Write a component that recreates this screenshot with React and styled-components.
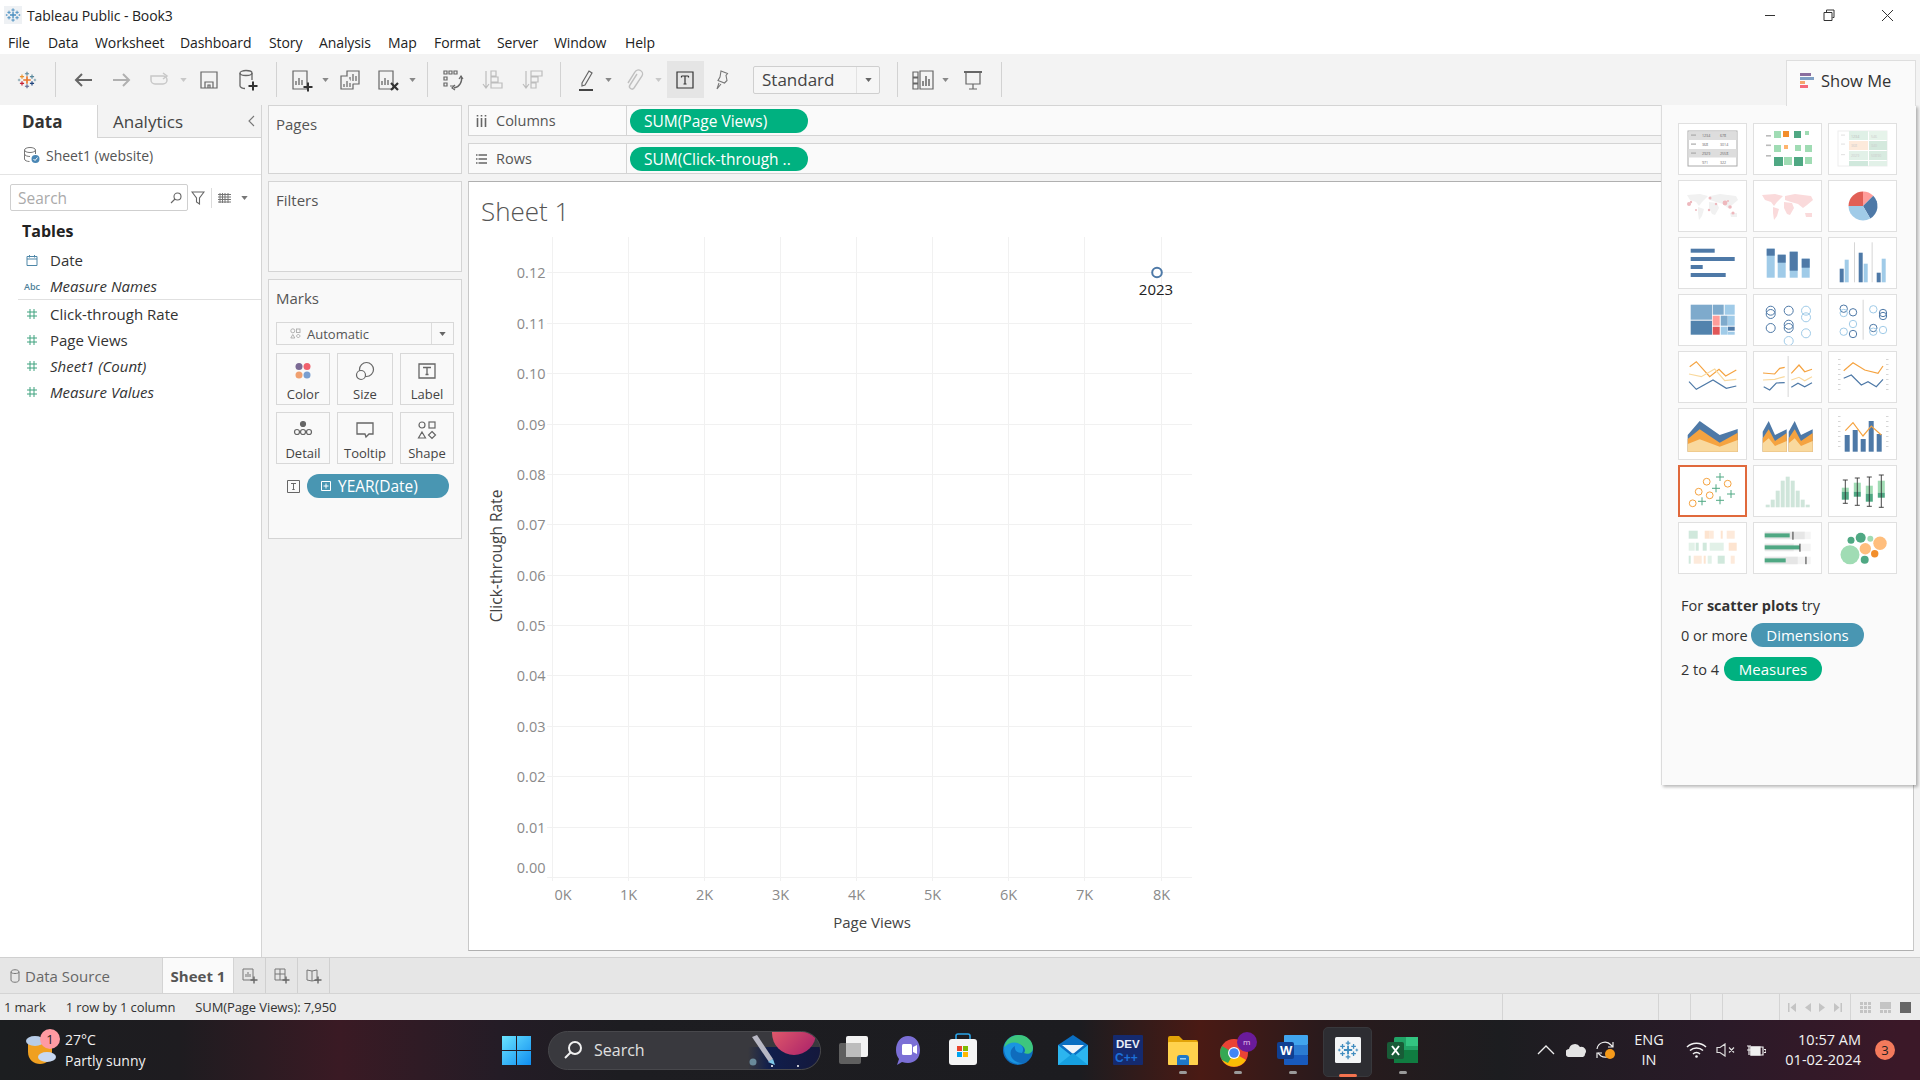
import React from "react";
import styled, { createGlobalStyle } from "styled-components";

const UI = `"Open Sans", "Noto Sans", "Liberation Sans", sans-serif`;

const Global = createGlobalStyle`
  html, body { margin: 0; padding: 0; background: #fff; }
  * { box-sizing: border-box; }
  svg { display: block; flex: none; }
`;

const Page = styled.div`
  width: 1920px; height: 1080px; overflow: hidden; display: flex; flex-direction: column;
  font-family: ${UI}; color: #333; background: #f3f3f3;
`;
const TitleBar = styled.div`
  height: 30px; flex: none; background: #fff; display: flex; align-items: center; padding-left: 4px;
`;
const TitleText = styled.span`
  margin-left: 5px; font-size: 14px; color: #222; letter-spacing: -0.1px; white-space: nowrap;
`;
const WinButtons = styled.div`margin-left: auto; margin-right: 3px; display: flex;`;
const WinButton = styled.div`
  width: 59px; height: 30px; display: flex; align-items: center; justify-content: center;
`;
const MenuBar = styled.div`
  height: 24px; flex: none; background: #fff; display: flex; align-items: center;
`;
const MenuItem = styled.span`
  font-size: 14px; color: #222; margin-left: ${p => p.$ml}px; width: ${p => p.$w}px; white-space: nowrap; letter-spacing: -0.1px;
`;
const Toolbar = styled.div`
  height: 51px; flex: none; background: #f3f3f3; display: flex; align-items: center; position: relative; z-index: 3;
`;
const Tool = styled.div`
  width: ${p => p.$w || 24}px; margin-left: ${p => p.$ml}px; height: 24px; flex: none;
  display: flex; align-items: center; justify-content: center;
`;
const ToolSep = styled.div`
  width: 1px; height: 35px; flex: none; background: #d2d2d2; margin-left: ${p => p.$ml}px;
`;
const SelectedTool = styled.div`
  width: 37px; height: 37px; margin-left: 5px; flex: none; background: #e5e5e5;
  display: flex; align-items: center; justify-content: center; padding-right: 2px;
`;
const StyleSelect = styled.div`
  width: 127px; height: 28px; margin-left: 19px; flex: none; background: #f6f6f6;
  border: 1px solid #cfcfcf; border-radius: 2px; display: flex; align-items: center; font-size: 17px; color: #444;
`;
const StyleLabel = styled.span`flex: 1; padding-left: 8px;`;
const StyleCaret = styled.span`
  width: 23px; height: 100%; border-left: 1px solid #e2e2e2; display: flex; align-items: center; justify-content: center;
`;
const ShowMeTab = styled.div`
  margin-left: auto; margin-right: 4px; align-self: flex-end; width: 130px; height: 46px; margin-bottom: -1px;
  background: #fafafa; border: 1px solid #dedede; border-bottom: none; display: flex; align-items: center;
  padding: 0 0 6px 13px; gap: 6px; font-size: 16.5px; color: #333;
`;

const Main = styled.div`
  flex: 1; min-height: 0; display: flex; position: relative; background: #f3f3f3;
`;
const DataPane = styled.div`
  width: 262px; flex: none; background: #fff; border-right: 1px solid #d4d4d4; display: flex; flex-direction: column;
`;
const PaneTabs = styled.div`height: 33px; display: flex; background: #f3f3f3; border-bottom: 1px solid #d4d4d4;`;
const PaneTab = styled.div`
  width: ${p => p.$w}px; height: ${p => (p.$active ? 33 : 32)}px; display: flex; align-items: center;
  padding-left: ${p => p.$pad}px; font-size: 17px; background: ${p => (p.$active ? "#fff" : "#f3f3f3")};
  border-right: ${p => (p.$active ? "1px solid #d4d4d4" : "none")};
  font-weight: ${p => (p.$active ? 700 : 400)}; color: ${p => (p.$active ? "#333" : "#444")};
`;
const PaneCollapse = styled.div`margin-left: auto; margin-right: 6px; align-self: center;`;
const SourceRow = styled.div`
  height: 37px; flex: none; border-bottom: 1px solid #e4e4e4; display: flex; align-items: center;
  padding: 0 0 2px 23px; gap: 6px; font-size: 14px; color: #555;
`;
const SearchRow = styled.div`
  margin-top: 9px; height: 27px; flex: none; display: flex; align-items: center; padding-left: 10px;
`;
const SearchBox = styled.div`
  width: 178px; height: 27px; border: 1px solid #cfcfcf; border-radius: 2px; display: flex; align-items: center;
  justify-content: space-between; padding: 0 5px 0 7px; font-size: 15.5px; color: #aaa;
`;
const FilterIcon = styled.div`margin-left: 3px;`;
const MiniDivider = styled.div`width: 1px; height: 20px; background: #dcdcdc; margin: 0 6px;`;
const MiniCaret = styled.span`margin-left: 10px;`;
const TablesHead = styled.div`
  height: 36px; flex: none; padding: 4px 0 0 22px; display: flex; align-items: center; font-size: 16px; font-weight: 700; color: #222;
`;
const FieldRow = styled.div`
  height: 26px; flex: none; display: flex; align-items: center; padding-left: 22px; font-size: 15px; color: #333;
  font-style: ${p => (p.$italic ? "italic" : "normal")};
`;
const FieldIcon = styled.span`
  width: 20px; margin-right: 8px; display: flex; justify-content: center; align-items: center; font-style: normal;
`;
const AbcGlyph = styled.span`font-size: 9px; font-weight: 600; color: #4e7f99;`;
const FieldDivider = styled.div`height: 1px; flex: none; background: #e0e0e0; margin: 0 0 1px 18px;`;

const CardColumn = styled.div`
  width: 194px; flex: none; margin-left: 6px; display: flex; flex-direction: column; gap: 7px;
`;
const Card = styled.div`
  height: ${p => p.$h}px; flex: none; background: #f9f9f9; border: 1px solid #d4d4d4; padding: 8px 7px 0 7px;
`;
const CardTitle = styled.div`height: 20px; line-height: 20px; font-size: 15px; color: #555;`;
const MarkSelect = styled.div`
  margin-top: 14px; height: 23px; width: 178px; border: 1px solid #d8d8d8; display: flex; align-items: center;
  font-size: 13px; color: #555;
`;
const MarkSelectBody = styled.div`flex: 1; display: flex; align-items: center; gap: 6px; padding-left: 13px;`;
const MarkSelectCaret = styled.div`
  width: 22px; height: 100%; border-left: 1px solid #dcdcdc; display: flex; align-items: center; justify-content: center;
`;
const MarkGrid = styled.div`
  margin-top: 8px; display: grid; grid-template-columns: 54px 56px 54px; grid-auto-rows: 52px; gap: 7px;
`;
const MarkButton = styled.div`
  border: 1px solid #d8d8d8; display: flex; flex-direction: column; align-items: center; padding-top: 6px;
`;
const MarkIcon = styled.div`height: 21px; display: flex; align-items: center;`;
const MarkLabel = styled.div`margin-top: 5px; font-size: 13px; line-height: 16px; color: #444;`;
const MarkPillRow = styled.div`margin-top: 10px; display: flex; align-items: center; padding-left: 11px; gap: 7px;`;
const TeePill = styled.div`
  height: 24px; width: 142px; border-radius: 12px; background: #4996b2; color: #fff; display: flex; align-items: center;
  padding-left: 14px; gap: 7px; font-size: 15.5px; white-space: nowrap;
`;

const RightColumn = styled.div`
  flex: 1; min-width: 0; margin: 0 6px 0 6px; display: flex; flex-direction: column; padding-bottom: 6px;
`;
const Shelf = styled.div`
  height: 31px; flex: none; background: #fafafa; border: 1px solid #d4d4d4; border-right: none; display: flex; align-items: center;
  margin-bottom: 7px;
`;
const ShelfLabel = styled.div`
  width: 158px; height: 100%; flex: none; border-right: 1px solid #d4d4d4; display: flex; align-items: center;
  padding-left: 7px; gap: 9px; font-size: 14.5px; color: #555;
`;
const MeasurePill = styled.div`
  height: 24px; width: 178px; margin-left: 3px; border-radius: 12px; background: #00b180; color: #fff;
  display: flex; align-items: center; padding-left: 14px; font-size: 15.5px; white-space: nowrap;
`;
const ViewPane = styled.div`
  flex: 1; min-height: 0; background: #fff; border: 1px solid #c8c8c8; border-top-color: #b0b0b0; border-bottom-color: #b0b0b0;
  overflow: hidden;
`;
const SheetTitle = styled.div`
  height: 48px; padding: 12px 0 0 12px; line-height: 34px; font-size: 26px; font-weight: 300; color: #555;
`;
const AxisLabel = styled.text`
  font-family: ${UI}; font-size: ${p => p.$size || 14.5}px; fill: ${p => p.$fill || "#8a8a8a"};
`;

const ShowMePanel = styled.div`
  position: absolute; top: 0; right: 4px; width: 255px; height: 680px; background: #fafafa; z-index: 2;
  border-left: 1px solid #dcdcdc; box-shadow: 2px 2px 3px rgba(0,0,0,0.28); padding: 18px 0 0 16px;
`;
const ThumbGrid = styled.div`
  display: grid; grid-template-columns: repeat(3, 69px); grid-auto-rows: 52px; column-gap: 6px; row-gap: 5px;
`;
const ThumbCell = styled.div`
  background: #fff; border: ${p => (p.$on ? "2px solid #e0693c" : "1px solid #e0e0e0")};
  display: flex; align-items: center; justify-content: center; overflow: hidden;
`;
const HintLine = styled.div`
  display: flex; align-items: center; padding-left: 3px; font-size: 14.5px; color: #333;
  height: ${p => p.$h || 24}px; margin-top: ${p => p.$mt}px; white-space: pre;
`;
const HintLabel = styled.span`width: ${p => p.$w}px; flex: none;`;
const HintPill = styled.div`
  height: 24px; width: ${p => p.$w}px; border-radius: 12px; background: ${p => p.$c}; color: #fff;
  display: flex; align-items: center; justify-content: center; font-size: 15px;
`;

const TabBar = styled.div`
  height: 37px; flex: none; background: #e6e6e6; border-top: 1px solid #d0d0d0; border-bottom: 1px solid #d4d4d4; display: flex;
`;
const SourceTab = styled.div`
  width: 162px; display: flex; align-items: center; padding-left: 10px; gap: 5px; font-size: 15px; color: #666;
`;
const SheetTab = styled.div`
  width: 72px; background: #fafafa; border-left: 1px solid #d4d4d4; border-right: 1px solid #d4d4d4; display: flex;
  align-items: center; justify-content: center; font-size: 15px; font-weight: 700; color: #555;
`;
const AddTab = styled.div`
  width: 32px; border-right: 1px solid #d0d0d0; display: flex; align-items: center; justify-content: center;
`;
const StatusBar = styled.div`
  height: 26px; flex: none; background: #ebebeb; display: flex; align-items: center; font-size: 13px; color: #333;
`;
const StatusText = styled.span`margin-left: ${p => p.$ml}px; white-space: nowrap; letter-spacing: -0.1px;`;
const StatusCells = styled.div`margin-left: auto; display: flex; height: 100%;`;
const StatusCell = styled.div`
  width: ${p => p.$w}px; border-left: 1px solid #d4d4d4; display: flex; align-items: center; justify-content: space-evenly;
`;

const Taskbar = styled.div`
  height: 60px; flex: none; display: flex; align-items: center; color: #fff;
  background: linear-gradient(90deg, #1c1e20 0, #1e1c20 180px, #3a1a24 340px, #241c26 500px, #1d1d21 620px, #1c1c20 1080px,
    #4a1a14 1200px, #2a1a1c 1320px, #1c1d20 1500px, #2a1a28 1720px, #3b1828 1900px);
`;
const WeatherBlock = styled.div`width: 502px; flex: none; display: flex; align-items: center; padding-left: 26px; gap: 7px;`;
const WeatherIcon = styled.div`position: relative; width: 32px; height: 32px;`;
const WeatherBadge = styled.div`
  position: absolute; left: 14px; top: -5px; width: 20px; height: 20px; border-radius: 50%; background: #ff9aa2; color: #222;
  font-size: 13px; display: flex; align-items: center; justify-content: center;
`;
const WeatherText = styled.div`font-size: 14px; line-height: 21px; color: #f0f0f0;`;
const TaskSearch = styled.div`
  margin-left: 17px; width: 273px; height: 39px; flex: none; border-radius: 20px; background: #39393e; border: 1px solid #48484c;
  display: flex; align-items: center; overflow: hidden; padding-left: 14px; font-size: 16px; color: #e0e0e0; gap: 11px;
`;
const SearchArt = styled.div`margin-left: auto;`;
const Apps = styled.div`margin-left: 4px; display: flex;`;
const AppSlot = styled.div`
  width: 55px; height: 60px; position: relative; display: flex; align-items: center; justify-content: center;
  &::before {
    content: ""; display: ${p => (p.$active ? "block" : "none")}; position: absolute; left: 3px; right: 3px; top: 7px; bottom: 3px;
    background: #2d2d32; border: 1px solid #38383c; border-radius: 5px;
  }
  &::after {
    content: ""; display: ${p => (p.$dot ? "block" : "none")}; position: absolute; bottom: ${p => (p.$active ? 3 : 6)}px; left: 50%;
    width: ${p => (p.$active ? 18 : 8)}px; margin-left: ${p => (p.$active ? -9 : -4)}px; height: 3px; border-radius: 2px;
    background: ${p => (p.$active ? "#f4734f" : "#9a9a9a")};
  }
  & > svg { position: relative; z-index: 1; }
`;
const Tray = styled.div`margin-left: auto; padding-right: 25px; display: flex; align-items: center;`;
const TraySlot = styled.div`width: 30px; display: flex; justify-content: center; margin-left: ${p => p.$ml || 0}px;`;
const TrayStack = styled.div`
  width: ${p => p.$w}px; text-align: ${p => p.$align}; font-size: 14.5px; line-height: 20px; color: #f2f2f2; white-space: nowrap;
`;
const NotifyBadge = styled.div`
  margin-left: 14px; width: 20px; height: 20px; border-radius: 50%; background: #f47a5c; color: #222; font-size: 13px;
  display: flex; align-items: center; justify-content: center;
`;

/* ---------- icon drawings ---------- */
const Ic = ({ w = 24, h = 24, vb, c = "#666", sw = 1.2, children }) => (
  <svg width={w} height={h} viewBox={vb || `0 0 ${w} ${h}`} fill="none" stroke={c} strokeWidth={sw}>{children}</svg>
);
const Caret = ({ c = "#888" }) => (
  <svg width="7" height="4" viewBox="0 0 8 5"><path d="M0 0h8L4 5z" fill={c} /></svg>
);
const Plus = ({ x, y, s, c, sw = 1.6 }) => <path d={`M${x - s} ${y}h${2 * s}M${x} ${y - s}v${2 * s}`} stroke={c} strokeWidth={sw} fill="none" />;
const Snow = ({ size = 24, color }) => {
  const p = (x, y, s, c, sw) => <Plus x={x} y={y} s={s} c={color || c} sw={sw} />;
  return (
    <svg width={size} height={size} viewBox="0 0 24 24">
      {p(12, 12, 4.5, "#e8762d", 2)}
      {p(12, 4.5, 2.5, "#5b879b", 1.4)}
      {p(12, 19.5, 2.5, "#5b6591", 1.4)}
      {p(6, 8, 2.5, "#eb9129", 1.4)}
      {p(18, 8, 2.5, "#59879b", 1.4)}
      {p(6, 16, 2.5, "#c72035", 1.4)}
      {p(18, 16, 2.5, "#1f447e", 1.4)}
      {p(2.5, 12, 1.5, "#7199a6", 1)}
      {p(21.5, 12, 1.5, "#7199a6", 1)}
    </svg>
  );
};
const Bars = ({ x = 7, y = 16 }) => <path d={`M${x} ${y}v-4M${x + 3} ${y}v-7M${x + 6} ${y}v-5`} stroke="#666" strokeWidth="1.3" />;

const ICONS = {
  back: <Ic><path d="M21 12H5M11 6l-6 6 6 6" stroke="#666" strokeWidth="2" /></Ic>,
  forward: <Ic><path d="M3 12h16M13 6l6 6-6 6" stroke="#b0b0b0" strokeWidth="2" /></Ic>,
  redo: <Ic c="#c8c8c8" sw="1.5"><path d="M4 8h12a4 4 0 010 8H8a4 4 0 01-4-4V8z" /><path d="M16 5l4 3-4 3" /></Ic>,
  save: <Ic><path d="M4 4h16v16H4zM8 20v-6h8v6M11 20v-3h2v3" /></Ic>,
  newds: <Ic sw="1.3"><ellipse cx="10" cy="5" rx="6" ry="2.5" /><path d="M4 5v13c0 1.5 3 2.5 5 2.5M16 5v7" /><Plus x={17} y={18} s={4.5} c="#333" sw={2} /></Ic>,
  newws: <Ic><path d="M3 3h14v18H3z" /><Bars x={6} y={17} /><Plus x={18} y={19} s={4.5} c="#333" sw={2} /></Ic>,
  dup: <Ic><path d="M9 3h12v13H9z" /><path d="M12 13V9M15 13V6M18 13V8" /><path d="M9 8H3v13h12v-5" fill="#f3f3f3" /><path d="M6 19v-3M9 19v-6M12 19v-4" /></Ic>,
  clear: <Ic><path d="M3 3h14v18H3z" /><Bars x={6} y={17} /><path d="M15 15l7 7M22 15l-7 7" stroke="#333" strokeWidth="2.2" /></Ic>,
  swap: <Ic c="#666"><path d="M3 3h3v3H3zM8 3h3v3H8zM13 3h3v3h-3zM3 9h3v3H3zM3 15h3v3H3zM9 18h4" /><path d="M20 8a9 9 0 01-7 12" strokeWidth="1.4" /><path d="M18 11l2-3 2 3M14 17l-3 3 3 2" /></Ic>,
  sortA: <Ic c="#bdbdbd"><path d="M6 3v17M3 16l3 4 3-4M11 3h5v5h-5zM11 9h7v5h-7zM11 15h11v5H11z" /></Ic>,
  sortD: <Ic c="#bdbdbd"><path d="M6 3v17M3 16l3 4 3-4M11 3h11v5H11zM11 9h7v5h-7zM11 15h5v5h-5z" /></Ic>,
  hi: <Ic><path d="M8 15l7-12 3 2-7 12-3 1zM5 22h14" /><path d="M5 22h14" strokeWidth="2" stroke="#444" /></Ic>,
  clip: <Ic c="#c0c0c0" sw="1.4"><path d="M16 6l-7 11a2.500 2.500 0 004 3l8-12a4 4 0 00-7-4L7 15" /></Ic>,
  tee: <Ic w={18} h={18} c="#333"><path d="M1 1h16v16H1z" /><path d="M5.500 5h7M9 5v8M7.500 13h3M5.500 5v1.500M12.500 5v1.500" /></Ic>,
  pin: <Ic w={14} h={20} vb="0 0 14 20" c="#777" sw="1.1"><path d="M6 1l6.500 2.500-1.500 2 1 5-2.500 2.500-6.500-2.500L5 7z" /><path d="M4 13l-2 6 4-5" /></Ic>,
  view: <Ic w={22} h={20} c="#666"><path d="M1 2h5v5H1zM1 8h5v5H1zM1 14h5v5H1zM8 1h13v18H8z" /><path d="M11 16v-5M14 16V6M17 16v-7" strokeWidth="1.500" /></Ic>,
  present: <Ic c="#666"><path d="M3 4h18" strokeWidth="2" /><path d="M5 4v12h14V4M12 16v5M8 21h8" /></Ic>,
};

const ChevronUp = () => <Ic w={18} h={10} c="#eee" sw="1.3"><path d="M1 9l8-8 8 8" /></Ic>;

/* ---------- show-me thumbnails ---------- */
const Tm = ({ children }) => <svg width="67" height="50" viewBox="1 1 67 50">{children}</svg>;
const BLUE = "#4e79a7", LBLUE = "#a0cbe8", ORANGE = "#f5a340", LOR = "#f9d99e", GREEN = "#4fa883", LGREEN = "#a0dcb4";
const R = ({ a, c }) => <rect x={a[0]} y={a[1]} width={a[2]} height={a[3]} fill={c} />;
const Poly = ({ p, c, w = 1.2 }) => <polyline points={p} fill="none" stroke={c} strokeWidth={w} />;
const Ring = ({ x, y, r = 3.7, c, w = 1 }) => <circle cx={x} cy={y} r={r} fill="none" stroke={c} strokeWidth={w} />;
const polar = (cx, cy, r, deg) => [cx + r * Math.sin(deg * Math.PI / 180), cy - r * Math.cos(deg * Math.PI / 180)];
const Slice = ({ a, b, c }) => {
  const [x0, y0] = polar(35, 26, 14.5, a), [x1, y1] = polar(35, 26, 14.5, b);
  return <path d={`M35 26L${x0} ${y0}A14.5 14.5 0 ${b - a > 180 ? 1 : 0} 1 ${x1} ${y1}Z`} fill={c} />;
};
const World = ({ c }) => (
  <path fill={c} d="M9 15L22 14L30 16L24 22L21 26L18 22L12 20ZM20 27L26 29L24 36L21 40L20 33ZM32 16L42 14L58 16L60 20L54 25L50 28L45 24L38 22L32 20ZM31 22L39 23L41 28L37 35L34 34L31 28ZM52 33L59 33L59 37L53 37Z" />
);
const Ticks = ({ x, w = 2.5 }) => (
  <g fill="#d6d6d6">{[8, 13, 18, 23, 28, 33, 38].map(y => <rect key={y} x={x} y={y} width={w} height="1" />)}</g>
);
const Area = ({ xs, tops, bottom = 43.7 }) => (
  <g>
    {tops.map((t, i) => {
      const top = xs.map((x, j) => `${x},${t.y[j]}`).join(" ");
      return <polygon key={i} points={`${xs[0]},${bottom} ${top} ${xs[xs.length - 1]},${bottom}`} fill={t.c} />;
    })}
  </g>
);
const MiniTxt = styled.text`font-family: ${UI}; font-size: 3.6px; fill: ${p => p.$c};`;
const SPLIT = [
  { c: BLUE, y: [23.7, 13, 27, 21.3] },
  { c: ORANGE, y: [30.3, 21.3, 33, 25] },
  { c: LOR, y: [35.3, 30.3, 38, 33] },
];

const THUMBS = [
  <Tm>
    <rect x="10" y="8" width="49" height="35" fill="#fff" stroke="#aaa" />
    <R a={[10.5, 8.5, 48, 8.5]} c="#ddd" /><R a={[10.5, 26, 48, 8.5]} c="#ddd" />
    {[11.5, 20.5, 29.5].map(y => <R key={y} a={[13, y, 5, 1.2]} c="#aaa" />)}
    {[["1234", "678", 14], ["368", "3014", 23], ["2929", "2558", 32], ["971", "322", 40.5]].map(r => (
      <g key={r[0]}><MiniTxt x="24" y={r[2]} $c="#666">{r[0]}</MiniTxt><MiniTxt x="42" y={r[2]} $c="#666">{r[1]}</MiniTxt></g>
    ))}
  </Tm>,
  <Tm>
    {[12, 21.5, 32].map(y => <R key={y} a={[13, y, 5, 1.6]} c="#bbb" />)}
    <R a={[21, 8, 7, 7]} c={LGREEN} /><R a={[30, 8, 6, 6]} c="#f28e2b" /><R a={[41, 8, 7, 7]} c={GREEN} /><R a={[52, 8, 4, 4]} c={LGREEN} />
    <R a={[21, 22, 7, 7]} c={LGREEN} /><R a={[31, 22, 4, 4]} c="#ffb56e" /><R a={[42, 22, 6, 6]} c={LGREEN} /><R a={[52, 22, 7, 7]} c={LGREEN} />
    <R a={[21, 34, 9, 9]} c={GREEN} /><R a={[31, 34, 8, 8]} c={LGREEN} /><R a={[41, 34, 9, 9]} c={GREEN} /><R a={[52, 34, 7, 7]} c={LGREEN} />
  </Tm>,
  <Tm>
    <rect x="10" y="8" width="49" height="35" fill="#fff" stroke="#eee" />
    {[11.5, 20.5, 31].map(y => <R key={y} a={[13, y, 4, 1.2]} c="#e5e5e5" />)}
    <R a={[21, 8, 19, 9]} c="#dff0e6" /><R a={[41, 8, 18, 9]} c="#e6f3ea" />
    <R a={[21, 18, 19, 9]} c="#fdeadb" /><R a={[41, 18, 18, 9]} c="#d4e9dd" />
    <R a={[21, 28, 19, 9]} c="#e2f1e8" /><R a={[41, 28, 18, 9]} c="#d8ebe0" />
    <R a={[21, 38, 19, 5]} c="#d0e8dc" /><R a={[41, 38, 18, 5]} c="#e2f1e8" />
    <MiniTxt x="23" y="14.5" $c="#bbb">1234</MiniTxt><MiniTxt x="43" y="14.5" $c="#ccc">546</MiniTxt>
    <MiniTxt x="23" y="24" $c="#ccc">368</MiniTxt><MiniTxt x="43" y="24" $c="#ccc">340</MiniTxt>
    <MiniTxt x="23" y="34" $c="#ccc">2029</MiniTxt><MiniTxt x="43" y="34" $c="#ccc">50890</MiniTxt>
  </Tm>,
  <Tm>
    <World c="#f1f1f1" />
    {[[11, 24, 2], [13, 22, 1.2], [32, 18, 1.5], [47, 23, 2.4], [52, 27, 1.8], [38, 24, 1.2], [18, 30, 1], [55, 33, 1.6], [31, 30, 1.2], [50, 21, 1]].map((d, i) => (
      <circle key={i} cx={d[0]} cy={d[1]} r={d[2]} fill="#eeb8bd" />
    ))}
  </Tm>,
  <Tm><World c="#fadadb" /></Tm>,
  <Tm>
    <Slice a={-90} b={0} c="#e15f56" />
    <Slice a={0} b={45} c="#ff9d9a" />
    <Slice a={45} b={150} c={BLUE} />
    <Slice a={150} b={270} c={LBLUE} />
  </Tm>,
  <Tm>
    {[[11.7, 24], [20, 44], [28, 12], [36, 35]].map(b => <R key={b[0]} a={[12.7, b[0], b[1], 4]} c={BLUE} />)}
  </Tm>,
  <Tm>
    {[[13.7, 11.7, 7], [24.7, 17.7, 8], [36.7, 14.7, 19], [48.7, 21.7, 9]].map(b => (
      <g key={b[0]}><R a={[b[0], b[1], 8, 40.7 - b[1]]} c={LBLUE} /><R a={[b[0], b[1], 8, b[2]]} c={BLUE} /></g>
    ))}
  </Tm>,
  <Tm>
    <R a={[26, 5.3, 0.8, 40]} c="#ccc" /><R a={[43.7, 5.3, 0.8, 40]} c="#ccc" />
    {[[11.7, 31.7, BLUE], [16.7, 22.7, LBLUE], [30.7, 15.7, BLUE], [35.7, 26.7, LBLUE], [48.7, 35.7, BLUE], [53.7, 21.7, LBLUE]].map(b => (
      <R key={b[0]} a={[b[0], b[1], 4, 45.3 - b[1]]} c={b[2]} />
    ))}
  </Tm>,
  <Tm>
    <R a={[12.7, 10.7, 21.3, 15]} c="#7eaacc" /><R a={[12.7, 26.7, 21.3, 14]} c="#5283ad" />
    <R a={[34.7, 10.7, 11, 10]} c="#7eaacc" /><R a={[46.7, 10.7, 10, 10]} c={LBLUE} />
    <R a={[34.7, 21.7, 7, 10]} c="#ff9d9a" /><R a={[42.7, 21.7, 7, 10]} c="#7eaacc" /><R a={[50, 21.7, 6.7, 10]} c={LBLUE} />
    <R a={[34.7, 32.7, 7, 8]} c="#e15759" /><R a={[42.7, 32.7, 7, 8]} c={LBLUE} /><R a={[50, 32.7, 6.7, 4]} c={BLUE} /><R a={[50, 37.7, 6.7, 3]} c={LBLUE} />
  </Tm>,
  <Tm>
    {[[17.7, 16.7], [17.7, 20], [17.7, 34], [35.7, 16.7], [35.7, 30.7], [35.7, 34]].map((d, i) => <Ring key={i} x={d[0]} y={d[1]} r={4.5} c={BLUE} />)}
    {[[53, 16.7], [53, 23.3], [53, 39.3], [35.7, 47]].map((d, i) => <Ring key={i} x={d[0]} y={d[1]} r={4.5} c={LBLUE} />)}
  </Tm>,
  <Tm>
    <R a={[34.7, 5.7, 0.8, 40]} c="#ccc" />
    {[[15.7, 14.7], [25, 18.3], [25, 40], [55, 19], [55, 22], [45.3, 34]].map((d, i) => <Ring key={i} x={d[0]} y={d[1]} c={BLUE} />)}
    {[[15.7, 19], [25, 30], [15.7, 37.7], [45.3, 15.3], [55, 36], [45.3, 37.7]].map((d, i) => <Ring key={i} x={d[0]} y={d[1]} c={LBLUE} />)}
  </Tm>,
  <Tm>
    <Poly p="11.7,15.7 18.3,10.7 31.7,25.7 41,18.3 47.7,25 58.3,19" c={ORANGE} />
    <Poly p="11,23 23.3,25.7 36.7,18 46.7,29.7 58.3,28.3" c={LOR} />
    <Poly p="11,30.7 18.3,38.3 35,29 48.3,37.3 58.3,35" c={BLUE} />
  </Tm>,
  <Tm>
    <R a={[34.7, 5, 0.8, 41]} c="#ccc" />
    <Poly p="10,22 21.7,23 26.7,17.3 31.7,16.3" c={ORANGE} />
    <Poly p="10,29 21.7,28.3 31.7,25.7" c={LOR} />
    <Poly p="10.7,35.7 16.7,39 23.3,32 31.7,31.7" c={BLUE} />
    <Poly p="38.3,22.3 46,14 51.7,20.7 59,18.3" c={ORANGE} />
    <Poly p="38.3,29 46,26.3 51.7,29.7 59,25.7" c={LOR} />
    <Poly p="38.3,36.3 45,32.3 51.7,35.7 59,31.7" c={BLUE} />
  </Tm>,
  <Tm>
    <Ticks x={10} /><Ticks x={58} />
    <Poly p="15.7,19.7 25,11.7 36.7,19 50,22.3 55,15" c={ORANGE} />
    <Poly p="15.7,27.3 23.3,24 33.3,34 40,30.7 48.3,35.7 55,28.3" c={BLUE} />
  </Tm>,
  <Tm>
    <Area xs={[9.7, 21.7, 41.7, 59.7]} tops={[
      { c: BLUE, y: [27, 13, 27, 21] },
      { c: ORANGE, y: [31, 21.3, 34.7, 24.7] },
      { c: LOR, y: [36, 31.3, 38.7, 32] },
    ]} />
  </Tm>,
  <Tm>
    <Area xs={[9.7, 15.7, 22, 33.7]} tops={SPLIT} />
    <Area xs={[35.7, 41.7, 48, 59.7]} tops={SPLIT} />
  </Tm>,
  <Tm>
    <Ticks x={10} /><Ticks x={58} />
    {[[16.7, 27], [24.7, 22], [32.7, 31], [40.7, 13], [48.7, 26]].map(b => <R key={b[0]} a={[b[0], b[1], 5, 43.7 - b[1]]} c={BLUE} />)}
    <Poly p="17.3,22.7 25,14.7 35,28 43.3,18 53.3,27" c={ORANGE} />
  </Tm>,
  <Tm>
    {[[28.7, 16.7], [49.7, 18.7], [20.7, 26.7], [31.7, 30.3], [14.7, 38.3]].map((d, i) => <Ring key={i} x={d[0]} y={d[1]} r={3.4} c={ORANGE} />)}
    {[[42, 12], [38, 23.3], [53, 29], [42, 35.3], [24, 36.3]].map((d, i) => <Plus key={i} x={d[0]} y={d[1]} s={4} c={GREEN} sw={1} />)}
  </Tm>,
  <Tm>
    {[435, 420, 393, 363, 351, 363, 393, 420, 435].map((t, i) => {
      const y = (t - 316) / 3;
      return <R key={i} a={[12.7 + i * 5, y, 4, 42.3 - y]} c="#cfe5da" />;
    })}
  </Tm>,
  <Tm>
    {[[17.3, 15, 38.3, 22.7, 26.7, 34.7], [29.3, 13, 40.3, 17.7, 26.7, 31.7], [41.3, 12, 41.3, 20.7, 28.7, 36.7], [53.3, 10, 42.3, 15.7, 27.7, 32.7]].map(b => (
      <g key={b[0]}>
        <R a={[b[0] - 3.5, b[3], 7, b[4] - b[3]]} c={LGREEN} />
        <R a={[b[0] - 3.5, b[4], 7, b[5] - b[4]]} c={GREEN} />
        <path d={`M${b[0]} ${b[1]}V${b[2]}M${b[0] - 2.5} ${b[1]}h5M${b[0] - 2.5} ${b[2]}h5`} stroke="#333" strokeWidth="0.9" fill="none" />
      </g>
    ))}
  </Tm>,
  <Tm>
    {[[10.7, 8.7, 9, "#d0e8dc"], [26.7, 8.7, 5, "#fde4d0"], [31.7, 8.7, 4, "#fdeadb"], [42.7, 8.7, 2, "#fde4d0"], [48.7, 8.7, 8, "#fdeadb"],
      [10.7, 20.7, 6, "#e2f1e8"], [17.7, 20.7, 3, "#d0e8dc"], [24.7, 20.7, 4, "#d0e8dc"], [31.7, 20.7, 14, "#e2f1e8"], [50.7, 20.7, 8, "#fde4d0"],
      [10.7, 33.7, 2, "#d0e8dc"], [15.7, 33.7, 8, "#fdeadb"], [25.7, 33.7, 2, "#fde4d0"], [29.7, 33.7, 4, "#e2f1e8"], [39.7, 33.7, 7, "#d0e8dc"], [52.7, 33.7, 4, "#fdeadb"]].map((b, i) => (
      <R key={i} a={[b[0], b[1], b[2], 8]} c={b[3]} />
    ))}
  </Tm>,
  <Tm>
    {[[9.7, 40, 25, 40], [21.7, 29, 35, 47], [34.7, 33, 21, 53]].map(b => (
      <g key={b[0]}>
        <R a={[11.7, b[0], 46, 7.5]} c="#f4f4f4" />
        <R a={[11.7, b[0], b[1], 7.5]} c="#e6e6e6" />
        <R a={[11.7, b[0] + 1.7, b[2], 4]} c={GREEN} />
      </g>
    ))}
    <R a={[39.5, 9.7, 0.9, 8]} c="#222" /><R a={[46.5, 21.7, 0.9, 8]} c="#222" /><R a={[52.5, 34.7, 0.9, 7.5]} c="#222" />
  </Tm>,
  <Tm>
    {[[22, 32.7, 9.5, LGREEN], [23, 18.3, 3.5, GREEN], [32.7, 15.7, 5, GREEN], [42.3, 16.7, 3, LGREEN], [52, 21.3, 6.7, "#ffbe7d"], [37.3, 26.7, 5.7, "#ffbe7d"], [46.7, 31.7, 3.7, "#f28e2b"], [36.7, 37.7, 4, GREEN]].map((d, i) => (
      <circle key={i} cx={d[0]} cy={d[1]} r={d[2]} fill={d[3]} />
    ))}
  </Tm>,
];

/* ---------- taskbar app icons ---------- */
const AppIcon = ({ children }) => <svg width="34" height="34" viewBox="0 0 34 34">{children}</svg>;
const DevText = styled.text`font-family: "Liberation Sans", sans-serif; font-weight: 700; font-size: ${p => p.$s}px; fill: ${p => p.$c};`;
const AppBadge = styled.text`font-family: ${UI}; font-size: 8px; fill: #e8c8f0;`;
const APPS = [
  { el: <AppIcon><rect x="3" y="10" width="22" height="21" rx="2" fill="#5f5f5f" /><rect x="10" y="3" width="22" height="21" rx="2" fill="#f2f2f2" /><rect x="10" y="10" width="15" height="14" fill="#bdbdbd" /></AppIcon> },
  { el: <AppIcon><path d="M17 3c7 0 12 6 12 14s-5 13-12 13c-2 0-4-.4-6-1l-5 3 2-6c-2-2.500-3-5.500-3-9C5 9 10 3 17 3z" fill="#7b6fd6" /><rect x="11" y="11" width="10" height="11" rx="1.500" fill="#fff" /><path d="M22 14l4-2v9l-4-2z" fill="#fff" /></AppIcon> },
  { el: <AppIcon><path d="M10 6V3a2 2 0 012-2h10a2 2 0 012 2v3" fill="none" stroke="#2aa4e8" strokeWidth="1.600" /><rect x="3" y="6" width="28" height="26" rx="3" fill="#f4f4f4" /><rect x="11" y="13" width="5" height="5" fill="#e8452c" /><rect x="17" y="13" width="5" height="5" fill="#7fba00" /><rect x="11" y="19" width="5" height="5" fill="#00a4ef" /><rect x="17" y="19" width="5" height="5" fill="#ffb900" /></AppIcon> },
  { el: <AppIcon><circle cx="17" cy="17" r="15" fill="#0f6cbd" /><path d="M3 15C4 6 11 2 18 2c8 0 14 6 14 13 0 5-5 7-9 5 2-2 1-6-3-8-6-3-14 0-17 3z" fill="#3dc67e" /><path d="M3 15c4-6 13-7 17-3 2 2 3 5 1 8-4 0-8-2-7-7-4 2-6 7-3 12 2 3 6 5 11 5-9 3-19-3-19-15z" fill="#1a95e0" /></AppIcon> },
  { el: <AppIcon><path d="M2 12L17 2l15 10v20H2z" fill="#0a6fc2" /><path d="M2 12l15 12 15-12v20H2z" fill="#2cb5ef" /><path d="M6 12h22l-11 9z" fill="#eef4fa" /><path d="M2 32l15-12 15 12z" fill="#16a0e0" /></AppIcon> },
  { el: <AppIcon><rect x="2" y="2" width="30" height="30" rx="1" fill="#152a6e" /><DevText x="5" y="15" $s={11.500} $c="#e8eef8">DEV</DevText><DevText x="4" y="29" $s={12} $c="#1c70d8">C++</DevText></AppIcon> },
  { el: <AppIcon><path d="M2 5a2 2 0 012-2h9l4 4h13a2 2 0 012 2v21a2 2 0 01-2 2H4a2 2 0 01-2-2z" fill="#e2a308" /><rect x="2" y="9" width="30" height="23" rx="1" fill="#ffd24d" /><path d="M11 25a3 3 0 013-3h6a3 3 0 013 3v7H11z" fill="#1e78c8" /><rect x="14" y="25" width="6" height="1.500" fill="#9ed0f0" /></AppIcon> },
  { el: <svg width="38" height="36" viewBox="0 0 38 36"><circle cx="15" cy="21" r="14" fill="#ea4335" /><path d="M15 21L3 28a14 14 0 0024 0z" fill="#fbbc05" /><path d="M3 14a14 14 0 000 14l6 3 6-10z" fill="#34a853" /><circle cx="15" cy="21" r="6" fill="#fff" /><circle cx="15" cy="21" r="4.800" fill="#4285f4" /><circle cx="28" cy="10" r="10" fill="#6a1b9a" /><AppBadge x="24" y="13">m</AppBadge></svg> },
  { el: <AppIcon><rect x="8" y="2" width="24" height="10" rx="1" fill="#41a5ee" /><rect x="8" y="12" width="24" height="10" fill="#2b7cd3" /><rect x="8" y="22" width="24" height="10" rx="1" fill="#185abd" /><rect x="1" y="9" width="17" height="17" rx="2" fill="#103f91" /><DevText x="4" y="22" $s={13} $c="#fff">W</DevText></AppIcon> },
  { active: true, dot: true, el: <svg width="34" height="34" viewBox="0 0 34 34"><rect x="4" y="4" width="26" height="26" rx="1.500" fill="#f3f5f6" /><g transform="translate(6 6) scale(.92)"><Snow size={24} color="#3f8cbf" /></g></svg> },
  { dot: true, el: <AppIcon><rect x="8" y="4" width="24" height="26" rx="1.500" fill="#21a366" /><rect x="20" y="4" width="12" height="9" fill="#33c481" /><rect x="8" y="17" width="24" height="13" fill="#107c41" /><rect x="1" y="9" width="17" height="17" rx="2" fill="#185c37" /><path d="M6 13l7 9M13 13l-7 9" stroke="#fff" strokeWidth="2" /></AppIcon> },
];
const DOTTED = [6, 7, 8];

const YT = [[0.12, 272], [0.11, 323], [0.10, 373], [0.09, 424], [0.08, 474], [0.07, 524], [0.06, 575], [0.05, 625], [0.04, 675], [0.03, 726], [0.02, 776], [0.01, 827], [0.0, 877]];
const XT = [552.5, 628.5, 704.5, 780.5, 856.5, 932.5, 1008.5, 1084.5, 1161.5];

const Chart = () => (
  <svg width="760" height="720" viewBox="469 230 760 720">
    {XT.map(x => <path key={x} d={`M${x} 237V881`} stroke="#f1f1f1" fill="none" />)}
    {YT.map(t => <path key={t[0]} d={`M547 ${t[1] + 0.5}H1192`} stroke="#f1f1f1" fill="none" />)}
    {YT.map(t => (
      <AxisLabel key={t[0]} x="545.5" y={(t[0] === 0 ? 867 : t[1]) + 5.5} textAnchor="end">{t[0].toFixed(2)}</AxisLabel>
    ))}
    {XT.map((x, i) => (
      <AxisLabel key={x} x={i === 0 ? 563 : x} y="900" textAnchor="middle">{i}K</AxisLabel>
    ))}
    <AxisLabel x="872" y="928" textAnchor="middle" $fill="#444" $size={15}>Page Views</AxisLabel>
    <AxisLabel transform="rotate(-90 502 556)" x="502" y="556" textAnchor="middle" $fill="#444" $size={15.5}>Click-through Rate</AxisLabel>
    <circle cx="1157" cy="272.500" r="4.800" fill="#fff" stroke="#4e79a7" strokeWidth="2" />
    <AxisLabel x="1156" y="295" textAnchor="middle" $fill="#222" $size={15}>2023</AxisLabel>
  </svg>
);

const MENU = [["File", 8], ["Data", 48], ["Worksheet", 95], ["Dashboard", 180], ["Story", 269], ["Analysis", 319], ["Map", 388], ["Format", 434], ["Server", 497], ["Window", 554], ["Help", 625]];
const MENU_W = [22, 33, 70, 74, 34, 54, 28, 47, 42, 56, 33];
const MARKS = [
  ["Color", <svg width="20" height="20" viewBox="0 0 20 20"><circle cx="6" cy="5.500" r="3.500" fill="#7b6a94" /><circle cx="14" cy="5.500" r="3.500" fill="#f0606d" /><circle cx="6" cy="14" r="3.500" fill="#f0a070" /><circle cx="14" cy="14" r="3.500" fill="#7a9fd0" /></svg>],
  ["Size", <Ic w={20} h={20} c="#666"><circle cx="11.500" cy="8.500" r="7" /><circle cx="6" cy="14" r="4.500" fill="#f9f9f9" /></Ic>],
  ["Label", <Ic w={20} h={20} c="#666" sw="1.3"><path d="M2 3h16v14H2z" /><path d="M6 6.500h8M10 6.500v7M8.500 13.500h3" /></Ic>],
  ["Detail", <Ic w={20} h={20} c="#666"><circle cx="10" cy="4" r="2.500" fill="#666" /><circle cx="4" cy="12" r="2.500" /><circle cx="10" cy="12" r="2.500" /><circle cx="16" cy="12" r="2.500" /></Ic>],
  ["Tooltip", <Ic w={20} h={20} c="#666" sw="1.3"><path d="M2 3h16v11h-4l-3 3-1-3H2z" /></Ic>],
  ["Shape", <Ic w={20} h={20} c="#666"><circle cx="5" cy="5" r="3" /><rect x="12" y="2" width="6" height="6" /><path d="M5 12l3.500 6h-7zM15 11.500l3.500 3.500-3.500 3.500-3.500-3.500z" /></Ic>],
];
const FIELDS_TOP = [
  [<Ic w={12} h={12} c="#4e87a8" sw="1"><path d="M1 2.500h10v9H1zM1 5h10M3.500 1v2.500M8.500 1v2.500" /></Ic>, "Date", false],
  [<AbcGlyph>Abc</AbcGlyph>, "Measure Names", true],
];
const HASH = <Ic w={12} h={12} c="#3fa27e" sw="1"><path d="M4 1v10M8 1v10M1 4h10M1 8h10" /></Ic>;
const FIELDS_BOTTOM = [["Click-through Rate", false], ["Page Views", false], ["Sheet1 (Count)", true], ["Measure Values", true]];

export default function App() {
  return (
    <Page>
      <Global />
      <TitleBar>
        <svg width="18" height="18" viewBox="0 0 18 18"><rect width="18" height="18" fill="#eef1f4" /><g transform="translate(1 1) scale(.67)"><Snow size={24} color="#4a8fc0" /></g></svg>
        <TitleText>Tableau Public - Book3</TitleText>
        <WinButtons>
          <WinButton><Ic w={12} h={12} c="#333" sw="1"><path d="M1 6.500h10" /></Ic></WinButton>
          <WinButton><Ic w={12} h={12} c="#333" sw="1"><path d="M1 3.500h8v8H1zM3.500 3V1h7.500v7.500H9.500" /></Ic></WinButton>
          <WinButton><Ic w={13} h={13} c="#333" sw="1"><path d="M1 1l11 11M12 1L1 12" /></Ic></WinButton>
        </WinButtons>
      </TitleBar>
      <MenuBar>
        {MENU.map((m, i) => (
          <MenuItem key={m[0]} $w={MENU_W[i]} $ml={i === 0 ? m[1] : m[1] - MENU[i - 1][1] - MENU_W[i - 1]}>{m[0]}</MenuItem>
        ))}
      </MenuBar>
      <Toolbar>
        <Tool $ml={15}><Snow size={20} /></Tool>
        <ToolSep $ml={16} />
        <Tool $ml={15}>{ICONS.back}</Tool>
        <Tool $ml={15}>{ICONS.forward}</Tool>
        <Tool $ml={13}>{ICONS.redo}</Tool>
        <Tool $w={8} $ml={8}><Caret c="#c8c8c8" /></Tool>
        <Tool $ml={10}>{ICONS.save}</Tool>
        <Tool $ml={15}>{ICONS.newds}</Tool>
        <ToolSep $ml={16} />
        <Tool $ml={13}>{ICONS.newws}</Tool>
        <Tool $w={8} $ml={7}><Caret /></Tool>
        <Tool $ml={9}>{ICONS.dup}</Tool>
        <Tool $ml={14}>{ICONS.clear}</Tool>
        <Tool $w={8} $ml={8}><Caret /></Tool>
        <ToolSep $ml={11} />
        <Tool $ml={13}>{ICONS.swap}</Tool>
        <Tool $ml={15}>{ICONS.sortA}</Tool>
        <Tool $ml={16}>{ICONS.sortD}</Tool>
        <ToolSep $ml={16} />
        <Tool $ml={13}>{ICONS.hi}</Tool>
        <Tool $w={8} $ml={6}><Caret /></Tool>
        <Tool $ml={9}>{ICONS.clip}</Tool>
        <Tool $w={8} $ml={9}><Caret c="#c8c8c8" /></Tool>
        <SelectedTool>{ICONS.tee}</SelectedTool>
        <Tool $ml={6}>{ICONS.pin}</Tool>
        <StyleSelect>
          <StyleLabel>Standard</StyleLabel>
          <StyleCaret><Caret c="#666" /></StyleCaret>
        </StyleSelect>
        <ToolSep $ml={17} />
        <Tool $ml={13}>{ICONS.view}</Tool>
        <Tool $w={8} $ml={6}><Caret /></Tool>
        <Tool $ml={12}>{ICONS.present}</Tool>
        <ToolSep $ml={16} />
        <ShowMeTab>
          <svg width="15" height="15" viewBox="0 0 15 15"><rect y="0" width="11" height="3" fill="#8b6f9f" /><rect y="4" width="14" height="3" fill="#7f9fc4" /><rect y="8" width="5" height="3" fill="#f5a56e" /><rect y="12" width="8" height="3" fill="#f5697a" /></svg>
          Show Me
        </ShowMeTab>
      </Toolbar>
      <Main>
        <DataPane>
          <PaneTabs>
            <PaneTab $active $w={98} $pad={22}>Data</PaneTab>
            <PaneTab $w={100} $pad={15}>Analytics</PaneTab>
            <PaneCollapse><Ic w={8} h={12} c="#777" sw="1.1"><path d="M7 1L2 6l5 5" /></Ic></PaneCollapse>
          </PaneTabs>
          <SourceRow>
            <Ic w={17} h={18} c="#777" sw="1"><ellipse cx="7" cy="4" rx="5.500" ry="2.500" /><path d="M1.500 4v9c0 1.500 2.500 2.500 5 2.500M12.500 4v4M1.500 8c0 1.500 3 2.500 5.500 2.500" /><circle cx="12.500" cy="13" r="4" fill="#4a87b5" stroke="none" /><path d="M10.500 13l1.500 1.500 2.500-3" stroke="#fff" /></Ic>
            Sheet1 (website)
          </SourceRow>
          <SearchRow>
            <SearchBox>
              Search
              <Ic w={12} h={12} c="#666" sw="1.1"><circle cx="7.500" cy="4.500" r="3.500" /><path d="M5 7l-4 4" /></Ic>
            </SearchBox>
            <FilterIcon><Ic w={14} h={14} c="#666" sw="1.1"><path d="M1 1h12L8.500 7v6l-3-2V7z" /></Ic></FilterIcon>
            <MiniDivider />
            <Ic w={13} h={10} c="#777" sw="1"><path d="M0 1.500h13M0 4h13M0 6.500h13M0 9h13M2 0v10M4.500 0v10M7 0v10M10 0v10" /></Ic>
            <MiniCaret><Caret c="#777" /></MiniCaret>
          </SearchRow>
          <TablesHead>Tables</TablesHead>
          {FIELDS_TOP.map(f => (
            <FieldRow key={f[1]} $italic={f[2]}><FieldIcon>{f[0]}</FieldIcon>{f[1]}</FieldRow>
          ))}
          <FieldDivider />
          {FIELDS_BOTTOM.map(f => (
            <FieldRow key={f[0]} $italic={f[1]}><FieldIcon>{HASH}</FieldIcon>{f[0]}</FieldRow>
          ))}
        </DataPane>
        <CardColumn>
          <Card $h={69}><CardTitle>Pages</CardTitle></Card>
          <Card $h={91}><CardTitle>Filters</CardTitle></Card>
          <Card $h={260}>
            <CardTitle>Marks</CardTitle>
            <MarkSelect>
              <MarkSelectBody>
                <Ic w={11} h={11} c="#aaa" sw="0.9"><circle cx="2.800" cy="2.800" r="2" /><rect x="6.500" y="1" width="3.500" height="3.500" /><path d="M2.800 6.500l2 3.500H.8zM8.300 6l2 2-2 2-2-2z" /></Ic>
                Automatic
              </MarkSelectBody>
              <MarkSelectCaret><Caret c="#666" /></MarkSelectCaret>
            </MarkSelect>
            <MarkGrid>
              {MARKS.map(m => (
                <MarkButton key={m[0]}><MarkIcon>{m[1]}</MarkIcon><MarkLabel>{m[0]}</MarkLabel></MarkButton>
              ))}
            </MarkGrid>
            <MarkPillRow>
              <Ic w={13} h={13} c="#666" sw="1"><path d="M.5.5h12v12H.5z" /><path d="M4 3.500h5M6.500 3.500v6M5.300 9.500h2.400" /></Ic>
              <TeePill>
                <Ic w={10} h={10} c="#fff" sw="1"><path d="M.5.5h9v9h-9zM5 2.500v5M2.500 5h5" /></Ic>
                YEAR(Date)
              </TeePill>
            </MarkPillRow>
          </Card>
        </CardColumn>
        <RightColumn>
          <Shelf>
            <ShelfLabel>
              <Ic w={11} h={12} c="#666" sw="1.6"><path d="M1.500 3v9M5.500 3v9M9.500 3v9M1.500 0v1.500M5.500 0v1.500M9.500 0v1.500" /></Ic>
              Columns
            </ShelfLabel>
            <MeasurePill>SUM(Page Views)</MeasurePill>
          </Shelf>
          <Shelf>
            <ShelfLabel>
              <Ic w={11} h={12} c="#666" sw="1.4"><path d="M2.500 2h8.500M2.500 6h8.500M2.500 10h8.500M0 2h1.500M0 6h1.500M0 10h1.500" /></Ic>
              Rows
            </ShelfLabel>
            <MeasurePill>SUM(Click-through ..</MeasurePill>
          </Shelf>
          <ViewPane>
            <SheetTitle>Sheet 1</SheetTitle>
            <Chart />
          </ViewPane>
        </RightColumn>
        <ShowMePanel>
          <ThumbGrid>
            {THUMBS.map((t, i) => <ThumbCell key={i} $on={i === 18}>{t}</ThumbCell>)}
          </ThumbGrid>
          <HintLine $h={20} $mt={21}><span>For <b>scatter plots</b> try</span></HintLine>
          <HintLine $mt={8}><HintLabel $w={70}>0 or more</HintLabel><HintPill $w={113} $c="#4996b2">Dimensions</HintPill></HintLine>
          <HintLine $mt={10}><HintLabel $w={43}>2 to 4</HintLabel><HintPill $w={98} $c="#00b180">Measures</HintPill></HintLine>
        </ShowMePanel>
      </Main>
      <TabBar>
        <SourceTab>
          <Ic w={10} h={14} c="#777" sw="1"><path d="M1 3c0-3 8-3 8 0v8c0 3-8 3-8 0zM1 3c0 2 8 2 8 0" /></Ic>
          Data Source
        </SourceTab>
        <SheetTab>Sheet 1</SheetTab>
        <AddTab><Ic w={16} h={16} c="#777" sw="1"><path d="M1 1h10v11H1z" /><path d="M4 9V6M6 9V4M8 9V6" /><Plus x={12} y={12} s={3.500} c="#666" sw={1.4} /></Ic></AddTab>
        <AddTab><Ic w={16} h={16} c="#777" sw="1"><path d="M1 1h10v11H1zM1 6h10M6 1v11" /><Plus x={12} y={12} s={3.500} c="#666" sw={1.4} /></Ic></AddTab>
        <AddTab><Ic w={16} h={16} c="#777" sw="1"><path d="M1 2l5 1 5-1v10l-5 1-5-1zM6 3v10" /><Plus x={12} y={12} s={3.500} c="#666" sw={1.4} /></Ic></AddTab>
      </TabBar>
      <StatusBar>
        <StatusText $ml={4}>1 mark</StatusText>
        <StatusText $ml={20}>1 row by 1 column</StatusText>
        <StatusText $ml={20}>SUM(Page Views): 7,950</StatusText>
        <StatusCells>
          <StatusCell $w={156} />
          <StatusCell $w={32} />
          <StatusCell $w={32} />
          <StatusCell $w={57} />
          <StatusCell $w={71}>
            <svg width="8" height="9" viewBox="0 0 8 9" fill="#c4c4c4"><path d="M0 0h1.500v9H0zM8 0v9L2.500 4.500z" /></svg>
            <svg width="6" height="9" viewBox="0 0 6 9" fill="#c4c4c4"><path d="M6 0v9L0 4.500z" /></svg>
            <svg width="6" height="9" viewBox="0 0 6 9" fill="#c4c4c4"><path d="M0 0v9l6-4.500z" /></svg>
            <svg width="8" height="9" viewBox="0 0 8 9" fill="#c4c4c4"><path d="M8 0H6.500v9H8zM0 0v9l5.500-4.500z" /></svg>
          </StatusCell>
          <StatusCell $w={70}>
            <svg width="11" height="11" viewBox="0 0 11 11" fill="#c4c4c4"><path d="M0 0h3v3H0zM4 0h3v3H4zM8 0h3v3H8zM0 4h3v3H0zM4 4h3v3H4zM8 4h3v3H8zM0 8h3v3H0zM4 8h3v3H4zM8 8h3v3H8z" /></svg>
            <svg width="11" height="11" viewBox="0 0 11 11" fill="#c4c4c4"><path d="M0 0h11v7H0zM0 8h3v3H0zM4 8h3v3H4zM8 8h3v3H8z" /></svg>
            <svg width="11" height="11" viewBox="0 0 11 11" fill="#666"><path d="M0 0h11v11H0z" /></svg>
          </StatusCell>
        </StatusCells>
      </StatusBar>
      <Taskbar>
        <WeatherBlock>
          <WeatherIcon>
            <svg width="32" height="32" viewBox="0 0 32 32"><path d="M2 6h24v12c0 8-6 12-12 12S2 26 2 18z" fill="#f0a020" /><ellipse cx="9" cy="7" rx="9" ry="5" fill="#b8cde8" /><ellipse cx="21" cy="23" rx="9" ry="5" fill="#c8d8f0" /></svg>
            <WeatherBadge>1</WeatherBadge>
          </WeatherIcon>
          <WeatherText>27°C<br />Partly sunny</WeatherText>
        </WeatherBlock>
        <svg width="29" height="29" viewBox="0 0 29 29"><defs><linearGradient id="wg" x1="0" y1="0" x2="1" y2="1"><stop offset="0" stopColor="#6ae4ff" /><stop offset="1" stopColor="#0f8df0" /></linearGradient></defs><path d="M0 0h14v14H0zM15 0h14v14H15zM0 15h14v14H0zM15 15h14v14H15z" fill="url(#wg)" /></svg>
        <TaskSearch>
          <Ic w={20} h={20} c="#f0f0f0" sw="2"><circle cx="12" cy="8" r="6" /><path d="M7.500 12.500L2 18" /></Ic>
          Search
          <SearchArt>
            <svg width="72" height="39" viewBox="0 0 72 39">
              <defs><linearGradient id="sp" x1="0" y1="0" x2="1" y2="1"><stop offset="0" stopColor="#f06a6a" /><stop offset="1" stopColor="#a81f6a" /></linearGradient><linearGradient id="sk" x1="0" y1="0" x2="1" y2="0"><stop offset="0" stopColor="#101e4c" stopOpacity="0" /><stop offset="0.3" stopColor="#101e4c" /><stop offset="1" stopColor="#14183c" /></linearGradient></defs>
              <rect x="0" y="16" width="72" height="23" fill="url(#sk)" />
              <circle cx="46" cy="2" r="22" fill="url(#sp)" />
              <path d="M4 6l5-2 16 24-4 3z" fill="#b8b8c4" />
              <path d="M20 31l5-3 2 6z" fill="#7fc8e8" />
              <circle cx="5" cy="31" r="3.500" fill="#6a8a9a" />
              <circle cx="24" cy="35" r="1" fill="#fff" />
              <circle cx="50" cy="35" r="1" fill="#fff" />
            </svg>
          </SearchArt>
        </TaskSearch>
        <Apps>
          {APPS.map((a, i) => (
            <AppSlot key={i} $active={a.active} $dot={a.dot || DOTTED.includes(i)}>{a.el}</AppSlot>
          ))}
        </Apps>
        <Tray>
          <TraySlot><ChevronUp /></TraySlot>
          <TraySlot><svg width="21" height="14" viewBox="0 0 21 14"><path d="M4 14a4 4 0 01-1-8 6 6 0 0111-2 4.500 4.500 0 015 7 3 3 0 01-2 3z" fill="#e4e4e4" /></svg></TraySlot>
          <TraySlot>
            <svg width="22" height="22" viewBox="0 0 22 22" fill="none" stroke="#eee" strokeWidth="1.200"><path d="M2 10a8 8 0 0114-4l2 2M18 3v5h-5M3 14l3 3a8 8 0 006 1" /><path d="M2 19v-5h5" /><circle cx="15" cy="15" r="5" fill="#f59a1a" stroke="none" /></svg>
          </TraySlot>
          <TrayStack $w={56} $align="center">ENG<br />IN</TrayStack>
          <TraySlot $ml={4}><Ic w={21} h={16} c="#f2f2f2" sw="1.500"><path d="M1 5c5-5 14-5 19 0M4 8.500c3.500-3.500 9.500-3.500 13 0M7 12c2-2 5-2 7 0" /><circle cx="10.500" cy="14.500" r="1.300" fill="#f2f2f2" stroke="none" /></Ic></TraySlot>
          <TraySlot><Ic w={20} h={14} c="#ddd" sw="1.200"><path d="M1 4.500h3l5-3.500v12L4 9.500H1zM13 4.500l5 5M18 4.500l-5 5" /></Ic></TraySlot>
          <TraySlot><Ic w={20} h={14} c="#f0f0f0" sw="1.200"><path d="M5 4h12v8H5zM18 6.500h2v3h-2" /><rect x="5" y="4" width="9" height="8" fill="#f0f0f0" /><path d="M1 3h4M1 7h4M3 3v9" /></Ic></TraySlot>
          <TrayStack $w={90} $align="right">10:57 AM<br />01-02-2024</TrayStack>
          <NotifyBadge>3</NotifyBadge>
        </Tray>
      </Taskbar>
    </Page>
  );
}
